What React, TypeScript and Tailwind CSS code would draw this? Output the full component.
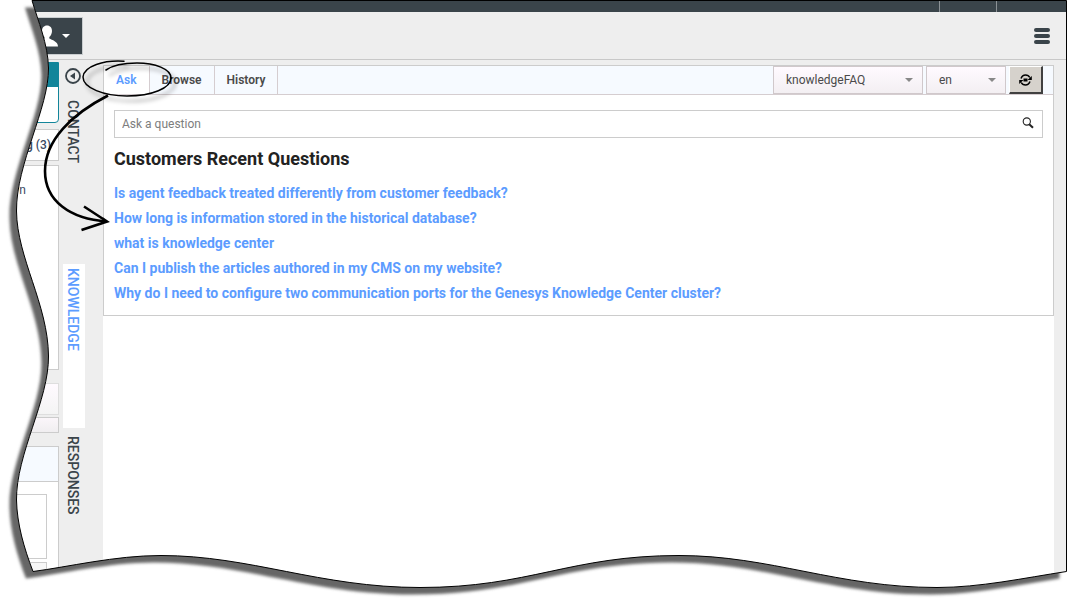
import { useState } from 'react'
import type { ReactNode } from 'react'

type Tab = 'Ask' | 'Browse' | 'History'

const TABS: Tab[] = ['Ask', 'Browse', 'History']

const QUESTIONS = [
  'Is agent feedback treated differently from customer feedback?',
  'How long is information stored in the historical database?',
  'what is knowledge center',
  'Can I publish the articles authored in my CMS on my website?',
  'Why do I need to configure two communication ports for the Genesys Knowledge Center cluster?',
]

function TopBar() {
  return (
    <header className="border-b border-[#c8c8c8]">
      <div className="flex h-3 justify-end border-t border-black bg-[#3a444a]">
        <span className="w-[57px] border-l border-[#8b9195]" />
        <span className="w-[71px] border-l border-[#8b9195]" />
      </div>
      <div className="flex h-[47px] items-center justify-between pr-[17px]">
        <button
          type="button"
          aria-label="User menu"
          className="flex h-[38px] w-[83px] items-center justify-end gap-1 border border-[#c9cdcf] bg-[#3a444a] pr-3 text-white"
        >
          <svg width="22" height="22" viewBox="0 0 22 22" fill="currentColor" aria-hidden="true">
            <path d="M11 0.500c-3.200 0-5 2.300-5 5.500 0 2.500 1 4.800 2.500 6v1.500C6 15 0 16 0 21.500h22c0-5-6-6.500-8.700-8V12c1.500-1.200 2.700-3.500 2.700-6 0-3.200-1.800-5.500-5-5.500z" />
          </svg>
          <svg width="8" height="4" viewBox="0 0 8 4" fill="currentColor" aria-hidden="true">
            <path d="M0 0h8L4 4z" />
          </svg>
        </button>
        <button type="button" aria-label="Menu" className="flex w-4 flex-col gap-0.5 text-[#3a444a]">
          <span className="h-1 w-full rounded-full bg-current" />
          <span className="h-1 w-full rounded-full bg-current" />
          <span className="h-1 w-full rounded-full bg-current" />
        </button>
      </div>
    </header>
  )
}

function CaseColumn() {
  return (
    <aside className="flex w-[59px] shrink-0 flex-col pt-0.5 text-[#3a4a63]">
      <div className="h-[61px] rounded-b-sm border border-[#12859a] bg-white">
        <div className="h-6 bg-[#12859a]" />
      </div>
      <div className="mt-1.5 flex h-8 items-center justify-end border border-[#cccccc] bg-white pr-[7px] text-xs font-medium">
        g&nbsp;(3)
      </div>
      <div className="mt-1 h-[205px] border border-[#cccccc] bg-white pt-4 pr-8 text-right text-xs">
        n
      </div>
      <div className="mt-[13px] h-8 border border-[#dedede] bg-linear-to-b from-[#fffaff] to-[#f4f4f4]" />
      <div className="mt-0.5 h-4 border border-[#cccccc] bg-linear-to-b from-[#fbf6fa] to-[#f0eef0]" />
      <div className="mt-[13px] h-9 border border-[#cccccc] bg-[#f6faff]" />
      <div className="flex flex-1 flex-col gap-[3px] border-r border-[#cccccc] bg-white pt-3 pr-[11px]">
        <div className="h-[65px] border border-[#cccccc]" />
        <div className="flex-1 border border-[#cccccc] bg-[#f7f7f7]" />
      </div>
    </aside>
  )
}

function SideTab({ active, className, children }: { active?: boolean; className: string; children: ReactNode }) {
  return (
    <button
      type="button"
      className={`${className} flex w-[22px] items-center pr-0.5 text-sm leading-5 font-medium [writing-mode:vertical-rl] ${
        active ? 'bg-white text-[#5c9cff]' : 'text-[#3a444a]'
      }`}
    >
      {children}
    </button>
  )
}

function SideTabs() {
  return (
    <nav className="flex w-11 shrink-0 flex-col items-start pt-2 pl-1">
      <button type="button" aria-label="Collapse" className="ml-0.5 text-[#3a444a]">
        <svg width="16" height="16" viewBox="0 0 16 16" fill="none" aria-hidden="true">
          <circle cx="8" cy="8" r="7" stroke="currentColor" strokeWidth="1.800" />
          <path d="M10 4.500v7L5 8z" fill="currentColor" />
        </svg>
      </button>
      <SideTab className="mt-4 h-[164px]">CONTACT</SideTab>
      <SideTab active className="h-[164px] pt-1">
        KNOWLEDGE
      </SideTab>
      <SideTab className="pt-2">RESPONSES</SideTab>
    </nav>
  )
}

function Picker({ label, options, className }: { label: string; options: string[]; className: string }) {
  return (
    <div className={`relative ${className}`}>
      <select
        aria-label={label}
        className="h-7 w-full appearance-none border border-[#d0c8cb] bg-linear-to-b from-[#fffaff] to-[#f3eff2] px-3 text-xs text-[#4a4a4a]"
      >
        {options.map((o) => (
          <option key={o}>{o}</option>
        ))}
      </select>
      <svg
        className="pointer-events-none absolute top-3 right-2.5"
        width="8"
        height="4"
        viewBox="0 0 8 4"
        fill="#888"
        aria-hidden="true"
      >
        <path d="M0 0h8L4 4z" />
      </svg>
    </div>
  )
}

function KnowledgePanel() {
  const [tab, setTab] = useState<Tab>('Ask')

  return (
    <section className="border border-[#cccccc] bg-white">
      <div className="flex h-[29px] border-b border-[#d5cdd0] bg-[#f6faff]">
        {TABS.map((t) => (
          <button
            key={t}
            type="button"
            onClick={() => setTab(t)}
            className={`border-r border-[#d5cdd0] px-3 text-xs font-semibold ${
              t === tab ? 'bg-white text-[#5c9cff]' : 'text-[#4a4a4a]'
            }`}
          >
            {t}
          </button>
        ))}
        <div className="ml-auto flex gap-[3px] pr-2.5">
          <Picker label="Knowledge base" options={['knowledgeFAQ']} className="w-[150px]" />
          <Picker label="Language" options={['en']} className="w-20" />
          <button
            type="button"
            aria-label="Refresh"
            className="flex h-7 w-[34px] items-center justify-center border-t border-r-2 border-b-2 border-l border-t-white border-r-[#404040] border-b-[#404040] border-l-white bg-[#d6d2cc] text-black"
          >
            <svg width="13" height="12" viewBox="0 0 13 12" fill="none" aria-hidden="true">
              <path
                d="M2 4.500C3 1.800 5 1 6.500 1c2 0 3.500 0.900 4.300 2.500M11 7.500C10 10.200 8 11 6.500 11c-2 0-3.500-0.900-4.300-2.500"
                stroke="currentColor"
                strokeWidth="1.500"
              />
              <path d="M12.800 2v4H8.500zM0.200 10V6h4.300z" fill="currentColor" />
              <rect x="4.500" y="4.500" width="4" height="3" fill="currentColor" />
            </svg>
          </button>
        </div>
      </div>

      <div className="px-2.5 pt-[15px] pb-[9px]">
        <form className="flex h-7 items-center border border-[#cccccc] pr-2" onSubmit={(e) => e.preventDefault()}>
          <input
            type="text"
            aria-label="Ask a question"
            placeholder="Ask a question"
            className="min-w-0 flex-1 px-[7px] text-xs text-[#333333] outline-none placeholder:text-[#7d7d7d]"
          />
          <button type="submit" aria-label="Search" className="pb-0.5">
            <svg width="12" height="12" viewBox="0 0 12 12" fill="none" stroke="#222" aria-hidden="true">
              <circle cx="4.800" cy="4.500" r="3.600" strokeWidth="1.100" />
              <path d="M7.200 7.200l3.800 3.600" strokeWidth="2" />
            </svg>
          </button>
        </form>
        <h2 className="mt-2 text-lg leading-[26px] font-bold text-[#222222]">Customers Recent Questions</h2>
        <ul className="mt-[9px]">
          {QUESTIONS.map((q) => (
            <li key={q} className="text-sm leading-[25px] font-bold">
              <a href="#" className="text-[#5c9cff]">
                {q}
              </a>
            </li>
          ))}
        </ul>
      </div>
    </section>
  )
}

// Outline of the torn sheet: wavy left and bottom, straight top and right.
const SHEET =
  'M32 0.500 C38 21 48 44 48.500 68 C49 108 16 164 16.500 211 C17 258 48 304 48.500 356 C49 400 16 454 16.500 500 C17 524 24 548 33 571.500 C68 567 115 555.500 161 555.500 C250 555.500 320 587.500 420 587.500 C530 587.500 570 555.500 679 555.500 C770 555.500 838 587.500 937 587.500 C980 587.500 1024 578 1066.500 571.500 V0.500 Z'

function TornEdge() {
  return (
    <svg
      className="pointer-events-none absolute inset-0 h-full w-full"
      viewBox="0 0 1067 604"
      preserveAspectRatio="none"
      aria-hidden="true"
    >
      <defs>
        <clipPath id="outside">
          <path d={`M0 0H1067V604H0Z ${SHEET}`} clipRule="evenodd" />
        </clipPath>
        <filter id="soft" x="-5%" y="-5%" width="110%" height="110%">
          <feGaussianBlur stdDeviation="1.500" />
        </filter>
      </defs>
      <g clipPath="url(#outside)">
        <path d="M0 0H1067V604H0Z" fill="#fff" />
        <path d={SHEET} transform="translate(-7 7)" fill="#666" filter="url(#soft)" />
      </g>
      <path d={SHEET} fill="none" stroke="#000" />
    </svg>
  )
}

function Callout() {
  return (
    <svg
      className="pointer-events-none absolute top-0 left-0"
      width="190"
      height="240"
      viewBox="0 0 190 240"
      fill="none"
      stroke="#000"
      aria-hidden="true"
    >
      <defs>
        <filter id="drop" x="-20%" y="-20%" width="150%" height="170%">
          <feDropShadow dx="4" dy="5" stdDeviation="2" floodOpacity="0.4" />
        </filter>
      </defs>
      <g filter="url(#drop)" strokeLinecap="round">
        <path d="M124 61.300C104 60 84 66 83 77c0 11 21 19 44 19 25 0 44-8 44-18" strokeWidth="1.500" />
        <path d="M171 78c0-9-16-15-34-15-13 0-24 2-31 7" strokeWidth="1.600" />
      </g>
      <path d="M108 95.500C72 114 45 140 45 171c0 30 25 48 62 50.500" strokeWidth="2.600" />
      <path d="M84 206.500l23 15-25.500 8.500" strokeWidth="2.600" />
    </svg>
  )
}

export default function App() {
  return (
    <div className="relative flex min-h-screen flex-col overflow-hidden bg-[#eeeeee] font-['Roboto',sans-serif]">
      <TopBar />
      <div className="flex flex-1">
        <CaseColumn />
        <SideTabs />
        <main className="mr-[13px] flex min-w-0 flex-1 flex-col pt-[5px]">
          <KnowledgePanel />
          <div className="flex-1 bg-white" />
        </main>
      </div>
      <TornEdge />
      <Callout />
    </div>
  )
}
